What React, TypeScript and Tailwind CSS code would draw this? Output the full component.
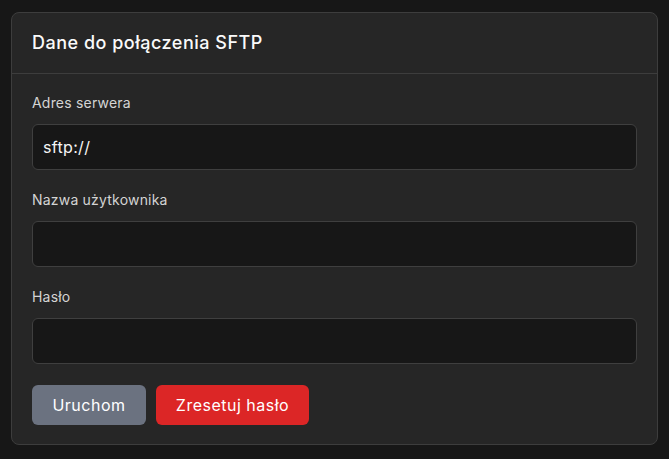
export default function App() {
  const inputCls =
    "block w-full h-[46px] rounded-md border border-[#3f3f3f] bg-[#171717] px-[10px] text-base tracking-[0.02em] text-[#f5f5f5] outline-none";
  const labelCls = "block text-sm leading-5 tracking-[0.2px] text-[#d4d4d4] mb-[11px]";
  return (
    <div
      className="min-h-[459px] bg-[#171717] px-[11px] pt-3"
      style={{ fontFamily: "Inter, 'Noto Sans', sans-serif" }}
    >
      <div className="rounded-lg border border-[#3d3d3d] bg-[#262626]">
        <div className="border-b border-[#3d3d3d] px-5 py-4">
          <h2 className="text-lg leading-7 font-medium tracking-[0.5px] text-[#fafafa]">
            Dane do połączenia SFTP
          </h2>
        </div>
        <div className="px-5 pt-[19px] pb-[19px]">
          <div>
            <label className={labelCls}>Adres serwera</label>
            <input className={inputCls} defaultValue="sftp://" />
          </div>
          <div className="mt-5">
            <label className={labelCls}>Nazwa użytkownika</label>
            <input className={inputCls} />
          </div>
          <div className="mt-5">
            <label className={labelCls}>Hasło</label>
            <input className={inputCls} type="password" />
          </div>
          <div className="mt-[21px] flex gap-[10px]">
            <button className="h-10 w-[114px] rounded-md bg-[#6b7280] text-base tracking-[0.5px] text-white">
              Uruchom
            </button>
            <button className="h-10 w-[153px] rounded-md bg-[#dc2626] text-base tracking-[0.5px] text-white">
              Zresetuj hasło
            </button>
          </div>
        </div>
      </div>
    </div>
  );
}
